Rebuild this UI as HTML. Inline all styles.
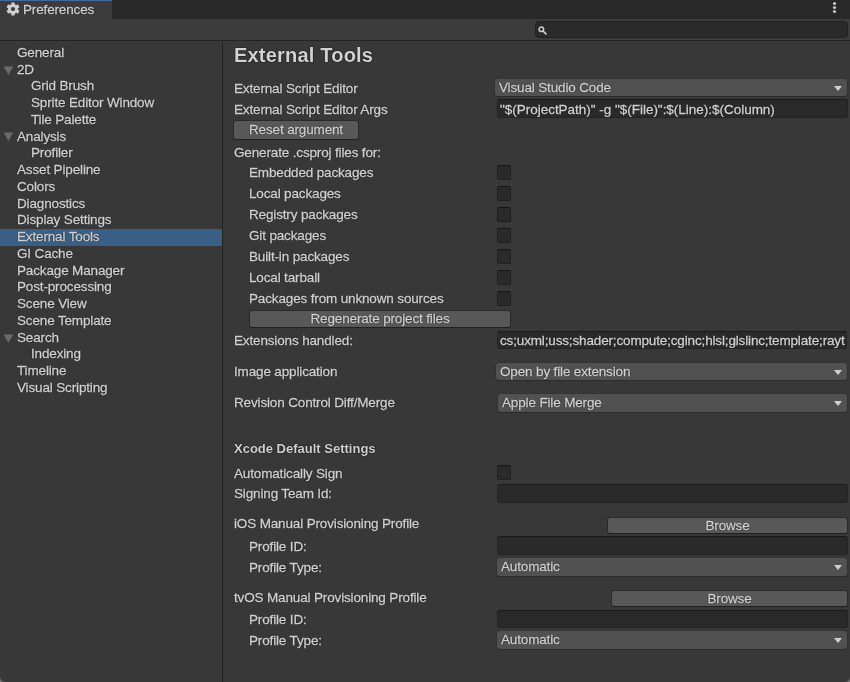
<!DOCTYPE html>
<html><head><meta charset="utf-8"><style>
html,body{margin:0;padding:0;}
body{width:850px;height:682px;overflow:hidden;background:#383838;position:relative;font-family:"Liberation Sans",sans-serif;font-size:13.5px;letter-spacing:-0.15px;color:#d2d2d2;}
.t,.dd span,.tf span,.bt{-webkit-text-stroke:0.3px #d2d2d2;text-shadow:0 0 1px #000,0 0 1px #000;}
.t{position:absolute;white-space:nowrap;}
.t,.dd span,.tf span,.bt{will-change:transform;}
#tabbar{position:absolute;left:0;top:0;width:850px;height:19px;background:#282828;}
#tab{position:absolute;left:0;top:0;width:112px;height:19px;background:#3c3c3c;border-top:1px solid #3f6b9e;box-sizing:border-box;}
#toolbar{position:absolute;left:0;top:19px;width:850px;height:21px;background:#3c3c3c;border-bottom:1px solid #232323;}
#search{position:absolute;left:535px;top:21px;width:313px;height:17px;box-sizing:border-box;background:#2a2a2a;border:1px solid #212121;border-radius:4px;}
#divider{position:absolute;left:222px;top:41px;width:1px;height:641px;background:#232323;}
.sel{position:absolute;left:0;width:222px;background:#395f86;}
.arr{position:absolute;}
.dd{position:absolute;box-sizing:border-box;background:#515151;border:0;box-shadow:0 0 0 0.6px #303030,0 1px 0.6px #262626;border-radius:3px;}
.dd span{position:absolute;white-space:nowrap;line-height:15px;}
.dd i{position:absolute;right:5.2px;top:50%;margin-top:-1.9px;width:0;height:0;border-left:4.2px solid transparent;border-right:4.2px solid transparent;border-top:5.6px solid #cfcfcf;}
.tf{position:absolute;box-sizing:border-box;background:#2a2a2a;border:1px solid #242424;border-top-color:#1a1a1a;border-radius:3px;overflow:hidden;}
.tf span{position:absolute;left:2px;white-space:nowrap;line-height:15px;}
.bt{position:absolute;box-sizing:border-box;background:#585858;border:1px solid #2a2a2a;border-bottom-color:#202020;border-radius:3px;text-align:center;white-space:nowrap;}
.cb{position:absolute;width:14px;height:15px;box-sizing:border-box;background:#2a2a2a;border:1px solid #1f1f1f;border-top-color:#141414;border-radius:2.5px;}
</style></head><body>
<div id="tabbar"></div>
<div id="tab"></div>
<svg style="position:absolute;left:5.5px;top:2.3px" width="14" height="14" viewBox="0 0 14 14"><path fill="#d0d0d0" fill-rule="evenodd" d="M5.29 2.30 L5.38 0.50 L8.62 0.50 L8.71 2.30 L10.21 3.17 L11.82 2.35 L13.44 5.15 L11.92 6.13 L11.92 7.87 L13.44 8.85 L11.82 11.65 L10.21 10.83 L8.71 11.70 L8.62 13.50 L5.38 13.50 L5.29 11.70 L3.79 10.83 L2.18 11.65 L0.56 8.85 L2.08 7.87 L2.08 6.13 L0.56 5.15 L2.18 2.35 L3.79 3.17 Z M9.1 7 A2.1 2.1 0 1 0 4.9 7 A2.1 2.1 0 1 0 9.1 7 Z"/></svg>
<div class="t" style="left:23px;top:2px;line-height:15px;">Preferences</div>
<svg style="position:absolute;left:832px;top:1px" width="5" height="13" viewBox="0 0 5 13"><circle cx="2.5" cy="2.5" r="1.6" fill="#c4c4c4"/><circle cx="2.5" cy="6.5" r="1.6" fill="#c4c4c4"/><circle cx="2.5" cy="10.5" r="1.6" fill="#c4c4c4"/></svg>
<div id="toolbar"></div>
<div id="search"></div>
<svg style="position:absolute;left:538.3px;top:25.6px" width="10" height="10" viewBox="0 0 10 10"><circle cx="3.3" cy="3.3" r="2.3" fill="none" stroke="#cfcfcf" stroke-width="1.5"/><path d="M5 5 L7.9 7.9" stroke="#cfcfcf" stroke-width="1.7" stroke-linecap="round"/></svg>
<div id="divider"></div>
<div class="t" style="left:17px;top:44.75px;line-height:16.75px;font-size:13.5px;letter-spacing:-0.15px">General</div>
<svg class="arr" style="left:2.5px;top:66px" width="11" height="10" viewBox="0 0 11 10"><path d="M0.6 0.6 L10.2 0.6 L5.4 9 Z" fill="#6a6a6a"/></svg>
<div class="t" style="left:17px;top:61.5px;line-height:16.75px;font-size:13.5px;letter-spacing:-0.15px">2D</div>
<div class="t" style="left:31px;top:78.25px;line-height:16.75px;font-size:13.5px;letter-spacing:-0.15px">Grid Brush</div>
<div class="t" style="left:31px;top:95.0px;line-height:16.75px;font-size:13.5px;letter-spacing:-0.15px">Sprite Editor Window</div>
<div class="t" style="left:31px;top:111.75px;line-height:16.75px;font-size:13.5px;letter-spacing:-0.15px">Tile Palette</div>
<svg class="arr" style="left:2.5px;top:132px" width="11" height="10" viewBox="0 0 11 10"><path d="M0.6 0.6 L10.2 0.6 L5.4 9 Z" fill="#6a6a6a"/></svg>
<div class="t" style="left:17px;top:128.5px;line-height:16.75px;font-size:13.5px;letter-spacing:-0.15px">Analysis</div>
<div class="t" style="left:31px;top:145.25px;line-height:16.75px;font-size:13.5px;letter-spacing:-0.15px">Profiler</div>
<div class="t" style="left:17px;top:162.0px;line-height:16.75px;font-size:13.5px;letter-spacing:-0.15px">Asset Pipeline</div>
<div class="t" style="left:17px;top:178.75px;line-height:16.75px;font-size:13.5px;letter-spacing:-0.15px">Colors</div>
<div class="t" style="left:17px;top:195.5px;line-height:16.75px;font-size:13.5px;letter-spacing:-0.15px">Diagnostics</div>
<div class="t" style="left:17px;top:212.25px;line-height:16.75px;font-size:13.5px;letter-spacing:-0.15px">Display Settings</div>
<div class="sel" style="top:229px;height:17px"></div>
<div class="t" style="left:17px;top:229.0px;line-height:16.75px;font-size:13.5px;letter-spacing:-0.15px">External Tools</div>
<div class="t" style="left:17px;top:245.75px;line-height:16.75px;font-size:13.5px;letter-spacing:-0.15px">GI Cache</div>
<div class="t" style="left:17px;top:262.5px;line-height:16.75px;font-size:13.5px;letter-spacing:-0.15px">Package Manager</div>
<div class="t" style="left:17px;top:279.25px;line-height:16.75px;font-size:13.5px;letter-spacing:-0.15px">Post-processing</div>
<div class="t" style="left:17px;top:296.0px;line-height:16.75px;font-size:13.5px;letter-spacing:-0.15px">Scene View</div>
<div class="t" style="left:17px;top:312.75px;line-height:16.75px;font-size:13.5px;letter-spacing:-0.15px">Scene Template</div>
<svg class="arr" style="left:2.5px;top:334px" width="11" height="10" viewBox="0 0 11 10"><path d="M0.6 0.6 L10.2 0.6 L5.4 9 Z" fill="#6a6a6a"/></svg>
<div class="t" style="left:17px;top:329.5px;line-height:16.75px;font-size:13.5px;letter-spacing:-0.15px">Search</div>
<div class="t" style="left:31px;top:346.25px;line-height:16.75px;font-size:13.5px;letter-spacing:-0.15px">Indexing</div>
<div class="t" style="left:17px;top:363.0px;line-height:16.75px;font-size:13.5px;letter-spacing:-0.15px">Timeline</div>
<div class="t" style="left:17px;top:379.75px;line-height:16.75px;font-size:13.5px;letter-spacing:-0.15px">Visual Scripting</div>
<div class="t" style="left:234px;top:44px;font-size:20px;line-height:22px;letter-spacing:0.2px;font-weight:bold;-webkit-text-stroke:0;">External Tools</div>
<div class="t" style="left:234px;top:81px;font-size:13.5px;line-height:15px;letter-spacing:-0.15px;">External Script Editor</div>
<div class="dd" style="left:495px;top:79px;width:352px;height:17px"><span style="left:3.5px;top:1px">Visual Studio Code</span><i></i></div>
<div class="t" style="left:234px;top:102px;font-size:13.5px;line-height:15px;letter-spacing:-0.15px;">External Script Editor Args</div>
<div class="tf" style="left:497px;top:99px;width:351px;height:19px"><span style="top:2px;letter-spacing:-0.02px;">"$(ProjectPath)" -g "$(File)":$(Line):$(Column)</span></div>
<div class="bt" style="left:233px;top:120px;width:126px;height:20px;line-height:18px">Reset argument</div>
<div class="t" style="left:234px;top:145px;font-size:13.5px;line-height:15px;letter-spacing:-0.15px;">Generate .csproj files for:</div>
<div class="t" style="left:249px;top:165px;font-size:13.5px;line-height:15px;letter-spacing:-0.15px;">Embedded packages</div>
<div class="cb" style="left:497px;top:165px"></div>
<div class="t" style="left:249px;top:186px;font-size:13.5px;line-height:15px;letter-spacing:-0.15px;">Local packages</div>
<div class="cb" style="left:497px;top:186px"></div>
<div class="t" style="left:249px;top:207px;font-size:13.5px;line-height:15px;letter-spacing:-0.15px;">Registry packages</div>
<div class="cb" style="left:497px;top:207px"></div>
<div class="t" style="left:249px;top:228px;font-size:13.5px;line-height:15px;letter-spacing:-0.15px;">Git packages</div>
<div class="cb" style="left:497px;top:228px"></div>
<div class="t" style="left:249px;top:249px;font-size:13.5px;line-height:15px;letter-spacing:-0.15px;">Built-in packages</div>
<div class="cb" style="left:497px;top:249px"></div>
<div class="t" style="left:249px;top:270px;font-size:13.5px;line-height:15px;letter-spacing:-0.15px;">Local tarball</div>
<div class="cb" style="left:497px;top:270px"></div>
<div class="t" style="left:249px;top:291px;font-size:13.5px;line-height:15px;letter-spacing:-0.15px;">Packages from unknown sources</div>
<div class="cb" style="left:497px;top:291px"></div>
<div class="bt" style="left:249px;top:310px;width:262px;height:18px;line-height:16px">Regenerate project files</div>
<div class="t" style="left:234px;top:333px;font-size:13.5px;line-height:15px;letter-spacing:-0.15px;">Extensions handled:</div>
<div class="tf" style="left:497px;top:331px;width:350px;height:18px"><span style="top:1px;">cs;uxml;uss;shader;compute;cginc;hlsl;glslinc;template;rayt</span></div>
<div class="t" style="left:234px;top:364px;font-size:13.5px;line-height:15px;letter-spacing:-0.15px;">Image application</div>
<div class="dd" style="left:496px;top:363px;width:351px;height:17px"><span style="left:3.5px;top:1px">Open by file extension</span><i></i></div>
<div class="t" style="left:234px;top:395px;font-size:13.5px;line-height:15px;letter-spacing:-0.15px;">Revision Control Diff/Merge</div>
<div class="dd" style="left:498px;top:394px;width:349px;height:18px"><span style="left:3.5px;top:1px">Apple File Merge</span><i></i></div>
<div class="t" style="left:234px;top:441px;font-size:13px;line-height:15px;letter-spacing:0px;font-weight:bold;-webkit-text-stroke:0;">Xcode Default Settings</div>
<div class="t" style="left:234px;top:466px;font-size:13.5px;line-height:15px;letter-spacing:-0.15px;">Automatically Sign</div>
<div class="cb" style="left:497px;top:465px"></div>
<div class="t" style="left:234px;top:486px;font-size:13.5px;line-height:15px;letter-spacing:-0.15px;">Signing Team Id:</div>
<div class="tf" style="left:497px;top:484px;width:351px;height:19px"><span style="top:2px;"></span></div>
<div class="t" style="left:234px;top:516px;font-size:13.5px;line-height:15px;letter-spacing:-0.15px;">iOS Manual Provisioning Profile</div>
<div class="bt" style="left:607px;top:517px;width:241px;height:17px;line-height:15px">Browse</div>
<div class="t" style="left:249px;top:539px;font-size:13.5px;line-height:15px;letter-spacing:-0.15px;">Profile ID:</div>
<div class="tf" style="left:497px;top:536px;width:351px;height:19px"><span style="top:2px;"></span></div>
<div class="t" style="left:249px;top:560px;font-size:13.5px;line-height:15px;letter-spacing:-0.15px;">Profile Type:</div>
<div class="dd" style="left:497px;top:558px;width:350px;height:18px"><span style="left:3.5px;top:1px">Automatic</span><i></i></div>
<div class="t" style="left:234px;top:590px;font-size:13.5px;line-height:15px;letter-spacing:-0.15px;">tvOS Manual Provisioning Profile</div>
<div class="bt" style="left:611px;top:590px;width:237px;height:17px;line-height:15px">Browse</div>
<div class="t" style="left:249px;top:612px;font-size:13.5px;line-height:15px;letter-spacing:-0.15px;">Profile ID:</div>
<div class="tf" style="left:497px;top:610px;width:351px;height:18px"><span style="top:1px;"></span></div>
<div class="t" style="left:249px;top:633px;font-size:13.5px;line-height:15px;letter-spacing:-0.15px;">Profile Type:</div>
<div class="dd" style="left:497px;top:631px;width:350px;height:18px"><span style="left:3.5px;top:1px">Automatic</span><i></i></div>
<div style="position:absolute;right:0;bottom:0;width:5px;height:5px;background:radial-gradient(circle at 0 0, rgba(0,0,0,0) 4px, #777 6px)"></div>
<div style="position:absolute;left:0;bottom:0;width:5px;height:5px;background:radial-gradient(circle at 100% 0, rgba(0,0,0,0) 4px, #777 6px)"></div>
</body></html>
